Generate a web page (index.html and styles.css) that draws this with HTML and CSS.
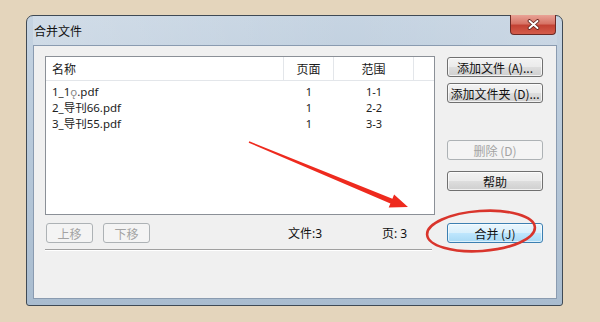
FILE: index.html
```html
<!DOCTYPE html>
<html lang="zh">
<head>
<meta charset="utf-8">
<title>合并文件</title>
<link rel="stylesheet" href="styles.css">
</head>
<body>
<div class="window">
  <div class="titlebar">
    <span class="title">合并文件</span>
    <div class="close">
      <svg width="13" height="11" viewBox="0 0 13 11"><path d="M2.5 2 L10.5 9 M10.5 2 L2.5 9" stroke="#5a1e18" stroke-width="3.6" stroke-linecap="round"/><path d="M2.5 2 L10.5 9 M10.5 2 L2.5 9" stroke="#ffffff" stroke-width="2" stroke-linecap="round"/></svg>
    </div>
  </div>
  <div class="client">
    <div class="left">
      <div class="list">
        <div class="list-head">
          <div class="cell name">名称</div>
          <div class="cell num">页面</div>
          <div class="cell num">范围</div>
          <div class="cell last"></div>
        </div>
        <div class="rows">
          <div class="row"><div class="cell name">1_1<span class="odd">ǫ</span>.pdf</div><div class="cell num">1</div><div class="cell num">1-1</div></div>
          <div class="row"><div class="cell name">2_导刊66.pdf</div><div class="cell num">1</div><div class="cell num">2-2</div></div>
          <div class="row"><div class="cell name">3_导刊55.pdf</div><div class="cell num">1</div><div class="cell num">3-3</div></div>
        </div>
      </div>
      <div class="bottom">
        <button class="btn small disabled">上移</button>
        <button class="btn small disabled gap">下移</button>
        <span class="stat files">文件:3</span>
        <span class="stat">页: 3</span>
      </div>
      <div class="sep"></div>
    </div>
    <div class="right">
      <button class="btn b1">添加文件 (A)...</button>
      <button class="btn b2">添加文件夹 (D)...</button>
      <button class="btn disabled b3">删除 (D)</button>
      <button class="btn b4">帮助</button>
      <button class="btn default b5">合并 (J)</button>
    </div>
  </div>
</div>
<svg class="overlay" width="600" height="322" viewBox="0 0 600 322">
  <polygon points="248.7,142.7 249.3,141.3 392.4,198.8 394.1,194.6 408,207 388.7,207.6 390.4,203.4" fill="#ee2a1e"/>
  <ellipse cx="481" cy="231" rx="54" ry="20" transform="rotate(-4 481 231)" fill="none" stroke="#d9352c" stroke-width="2.6"/>
</svg>
</body>
</html>
```
FILE: styles.css
```css
html, body {
  margin: 0;
  padding: 0;
}
body {
  width: 600px;
  height: 322px;
  overflow: hidden;
  background: #e4d5bc;
  font-family: "Noto Sans", "Noto Sans CJK SC", sans-serif;
  font-size: 12px;
  color: #1a1a1a;
  position: relative;
}
.window {
  margin: 15px 0 0 26px;
  width: 537px;
  height: 291px;
  box-sizing: border-box;
  border: 1px solid #3f4a55;
  border-radius: 7px 7px 3px 3px;
  background: linear-gradient(180deg, #c6d4e2 0%, #b9cadb 40%, #a9bccf 100%);
  padding: 0 5px 6px 6px;
  display: flex;
  flex-direction: column;
}
.titlebar {
  height: 29px;
  display: flex;
  align-items: center;
  background: linear-gradient(90deg, rgba(255,255,255,0.2), rgba(255,255,255,0) 60%, rgba(255,255,255,0.1));
}
.title {
  padding-left: 1px;
  font-size: 12px;
  color: #111;
  font-family: "Noto Sans CJK SC", sans-serif;
}
.close {
  margin-left: auto;
  margin-right: 1px;
  align-self: flex-start;
  margin-top: -1px;
  width: 46px;
  height: 20px;
  box-sizing: border-box;
  border: 1px solid #6b2a25;
  border-top: none;
  border-radius: 0 0 4px 4px;
  background: linear-gradient(180deg, #e9a396 0%, #d77466 45%, #c34234 55%, #d45c4a 100%);
  display: flex;
  align-items: center;
  justify-content: center;
}
.close svg { display: block; }
.client {
  flex: 1;
  border: 1px solid #8a9bb0;
  background: #f0f0f0;
  padding: 10px 0 0 11px;
  display: grid;
  grid-template-columns: 390px 96px;
  column-gap: 12px;
  align-items: start;
}
.left {
  display: flex;
  flex-direction: column;
}
.list {
  height: 159px;
  box-sizing: border-box;
  border: 1px solid #8b9097;
  background: #fff;
}
.list-head {
  display: grid;
  grid-template-columns: 238px 50px 80px 1fr;
  height: 24px;
  box-sizing: border-box;
  border-bottom: 1px solid #e3e6ea;
  font-family: "Noto Sans CJK SC", sans-serif;
}
.list-head .cell {
  border-right: 1px solid #e3e6ea;
  display: flex;
  align-items: center;
  box-sizing: border-box;
}
.list-head .last { border-right: none; }
.cell.name { padding-left: 6px; }
.cell.num { justify-content: center; text-align: center; }
.rows { padding-top: 3px; }
.row {
  display: grid;
  grid-template-columns: 238px 50px 80px;
  height: 16px;
  line-height: 16px;
  font-size: 11px;
  color: #222;
}
.row .cell.name { font-size: 11.5px; }
.odd { color: #888; }
.btn {
  font-family: "Noto Sans CJK SC", sans-serif;
  font-size: 12px;
  color: #111;
  height: 20px;
  padding: 0;
  box-sizing: border-box;
  border: 1px solid #707070;
  border-radius: 3px;
  background: linear-gradient(180deg, #f3f3f3 0%, #ebebeb 48%, #dddddd 52%, #cfcfcf 100%);
  box-shadow: inset 0 0 0 1px rgba(255,255,255,0.7);
  line-height: 17px;
  white-space: nowrap;
}
.btn.disabled {
  border-color: #adb2b5;
  background: #f4f4f4;
  color: #a3a3a3;
  box-shadow: none;
}
.btn.default {
  border-color: #3c7fb1;
  background: linear-gradient(180deg, #eaf6fd 0%, #d9f0fc 48%, #bee6fd 52%, #a7d9f5 100%);
  box-shadow: inset 0 0 0 1px rgba(255,255,255,0.6);
}
.bottom {
  margin-top: 8px;
  height: 20px;
  display: flex;
  align-items: center;
}
.btn.small {
  width: 47px;
  margin-left: 1px;
}
.btn.small.gap { margin-left: 10px; }
.stat {
  font-size: 12px;
  color: #111;
}
.stat.files {
  margin-left: 138px;
  width: 94px;
}
.sep {
  margin-top: 6px;
  width: 387px;
  height: 1px;
  background: #a0a0a0;
  border-bottom: 1px solid #fff;
}
.right {
  display: flex;
  flex-direction: column;
  padding-top: 1px;
}
.right .btn { width: 96px; }
.b2 { margin-top: 6px; }
.b3 { margin-top: 37px; }
.b4 { margin-top: 11px; }
.b5 { margin-top: 32px; }
.overlay {
  position: absolute;
  left: 0;
  top: 0;
  pointer-events: none;
}
```
